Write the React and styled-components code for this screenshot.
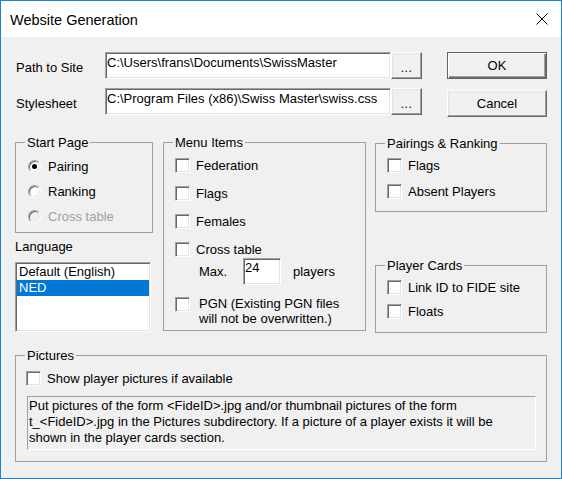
import React from 'react';
import styled, { createGlobalStyle, css } from 'styled-components';

const GlobalStyle = createGlobalStyle`
  html, body { margin: 0; padding: 0; background: #ffffff; }
  body {
    font-family: "Liberation Sans", Arial, sans-serif;
    font-size: 13px;
    color: #000;
  }
  * { box-sizing: border-box; }
`;

const sunken = css`
  border: 1px solid;
  border-color: #a0a0a0 #ffffff #ffffff #a0a0a0;
  box-shadow: inset 1px 1px 0 #696969, inset -1px -1px 0 #e3e3e3;
`;

const raised = css`
  border: 1px solid;
  border-color: #ffffff #696969 #696969 #ffffff;
  box-shadow: inset -1px -1px 0 #a0a0a0, inset 1px 1px 0 #e3e3e3;
`;

const Window = styled.div`
  width: 562px;
  height: 479px;
  border: 1px solid #1883d7;
  display: flex;
  flex-direction: column;
  background: #f0f0f0;
  overflow: hidden;
`;

const TitleBar = styled.div`
  flex: none;
  height: 36px;
  background: #ffffff;
  display: flex;
  align-items: center;
  justify-content: space-between;
  padding: 0 13px 0 9px;
`;

const Title = styled.div`
  font-size: 14.5px;
  line-height: 18px;
  padding-top: 1px;
`;

const Close = styled.svg`
  display: block;
  width: 12px;
  height: 12px;
`;

const Client = styled.div`
  flex: 1;
  padding: 15px 14px 0;
  display: flex;
  flex-direction: column;
`;

const TopArea = styled.div`
  display: flex;
  align-items: flex-start;
  height: 63px;
`;

const FieldGrid = styled.div`
  display: grid;
  grid-template-columns: 90px 286px 31px;
  grid-template-rows: 27px 27px;
  row-gap: 9px;
`;

const FieldLabel = styled.div`
  padding: 3px 0 0 1px;
  line-height: 15px;
  align-self: center;
`;

const TextField = styled.div`
  ${sunken};
  background: #ffffff;
  padding: ${(p) => p.$padTop ?? 1}px 1px 0 1px;
  line-height: 15px;
  white-space: nowrap;
  overflow: hidden;
`;

const Button = styled.div`
  ${raised};
  background: #f0f0f0;
  display: flex;
  align-items: center;
  justify-content: center;
  line-height: 15px;
`;

const Browse = styled(Button)`
  padding-top: 5px;
  font-size: 12px;
  letter-spacing: 0.5px;
`;

const ButtonColumn = styled.div`
  width: 100px;
  margin-left: 25px;
  display: flex;
  flex-direction: column;
  gap: 11px;
`;

const DialogButton = styled(Button)`
  height: 27px;
  ${(p) =>
    p.$default &&
    css`
      border: 1px solid #646464;
      box-shadow: inset 1px 1px 0 #ffffff, inset -1px -1px 0 #696969,
        inset -2px -2px 0 #a0a0a0;
    `}
`;

const Middle = styled.div`
  display: flex;
  align-items: flex-start;
  margin-top: 20px;
`;

const Column = styled.div`
  display: flex;
  flex-direction: column;
  flex: ${(p) => (p.$width ? `0 0 ${p.$width}px` : '1 1 0')};
  margin-left: ${(p) => p.$gap || 0}px;
  margin-top: ${(p) => p.$top || 0}px;
`;

const Group = styled.fieldset`
  margin: ${(p) => p.$top || 0}px 0 0 0;
  min-width: 0;
  border: 1px solid #a0a0a0;
  padding: 0;
`;

const Legend = styled.legend`
  margin-left: 9px;
  padding: 0 2px;
  line-height: 15px;
  font-size: 13px;
`;

const GroupBody = styled.div`
  display: flex;
  flex-direction: column;
  padding: ${(p) => p.$pad};
`;

const Row = styled.div`
  display: flex;
  align-items: ${(p) => (p.$start ? 'flex-start' : 'center')};
  height: ${(p) => (p.$h ? `${p.$h}px` : 'auto')};
  margin-top: ${(p) => p.$top || 0}px;
  line-height: 15px;
  white-space: nowrap;
`;

const CheckBox = styled.span`
  ${sunken};
  flex: none;
  width: 15px;
  height: 15px;
  background: #ffffff;
  margin-top: ${(p) => p.$shift || 0}px;
`;

const CheckText = styled.span`
  margin-left: ${(p) => p.$gap ?? 6}px;
`;

const RadioRow = styled.div`
  display: flex;
  align-items: center;
  height: 25px;
  line-height: 15px;
  color: ${(p) => (p.$disabled ? '#a0a0a0' : '#000')};
`;

const Radio = styled.span`
  flex: none;
  position: relative;
  width: 13px;
  height: 13px;
  border-radius: 50%;
  border: 1px solid;
  border-color: #a0a0a0 #ffffff #ffffff #a0a0a0;
  box-shadow: inset 1px 1px 0 #696969, inset -1px -1px 0 #e3e3e3;
  background: ${(p) => (p.$disabled ? '#f0f0f0' : '#ffffff')};
  margin-right: 7px;
  ${(p) =>
    p.$checked &&
    css`
      &::after {
        content: '';
        position: absolute;
        left: 3px;
        top: 3px;
        width: 5px;
        height: 5px;
        border-radius: 50%;
        background: #000;
      }
    `}
`;

const Label = styled.div`
  line-height: 15px;
  margin-top: ${(p) => p.$top || 0}px;
`;

const ListBox = styled.div`
  ${sunken};
  background: #ffffff;
  width: 136px;
  height: 70px;
  margin-top: 8px;
  padding: 1px;
`;

const ListItem = styled.div`
  height: 16px;
  line-height: 16px;
  padding-left: 2px;
  background: ${(p) => (p.$selected ? '#0078d7' : 'transparent')};
  color: ${(p) => (p.$selected ? '#ffffff' : '#000')};
`;

const MaxLabel = styled.span`
  width: 44px;
  margin-left: 24px;
`;

const SmallField = styled(TextField)`
  width: 38px;
  height: 27px;
`;

const Suffix = styled.span`
  margin-left: 12px;
`;

const Info = styled.div`
  border: 1px solid;
  border-color: #a0a0a0 #ffffff #ffffff #a0a0a0;
  margin: 10px 0 0 1px;
  height: 54px;
  padding: 1px 1px 0 1px;
  line-height: 16px;
  white-space: nowrap;
`;

function Check({ children, top, gap }) {
  return (
    <Row $top={top}>
      <CheckBox />
      <CheckText $gap={gap}>{children}</CheckText>
    </Row>
  );
}

export default function App() {
  return (
    <>
      <GlobalStyle />
      <Window>
        <TitleBar>
          <Title>Website Generation</Title>
          <Close viewBox="0 0 12 12">
            <path d="M0.5 0.5 L11.5 11.5 M11.5 0.5 L0.5 11.5" stroke="#000" strokeWidth="1" />
          </Close>
        </TitleBar>
        <Client>
          <TopArea>
            <FieldGrid>
              <FieldLabel>Path to Site</FieldLabel>
              <TextField $padTop={2}>C:\Users\frans\Documents\SwissMaster</TextField>
              <Browse>...</Browse>
              <FieldLabel>Stylesheet</FieldLabel>
              <TextField $padTop={2}>C:\Program Files (x86)\Swiss Master\swiss.css</TextField>
              <Browse>...</Browse>
            </FieldGrid>
            <ButtonColumn>
              <DialogButton $default>OK</DialogButton>
              <DialogButton>Cancel</DialogButton>
            </ButtonColumn>
          </TopArea>

          <Middle>
            <Column $width={138}>
              <Group>
                <Legend>Start Page</Legend>
                <GroupBody $pad="4px 0 3px 12px">
                  <RadioRow>
                    <Radio $checked />
                    Pairing
                  </RadioRow>
                  <RadioRow>
                    <Radio />
                    Ranking
                  </RadioRow>
                  <RadioRow $disabled>
                    <Radio $disabled />
                    Cross table
                  </RadioRow>
                </GroupBody>
              </Group>
              <Label $top={6}>Language</Label>
              <ListBox>
                <ListItem>Default (English)</ListItem>
                <ListItem $selected>NED</ListItem>
              </ListBox>
            </Column>

            <Column $width={203} $gap={10}>
              <Group>
                <Legend>Menu Items</Legend>
                <GroupBody $pad="8px 0 4px 11px">
                  <Check>Federation</Check>
                  <Check top={13}>Flags</Check>
                  <Check top={13}>Females</Check>
                  <Check top={13}>Cross table</Check>
                  <Row $top={1} $h={27}>
                    <MaxLabel>Max.</MaxLabel>
                    <SmallField>24</SmallField>
                    <Suffix>players</Suffix>
                  </Row>
                  <Row $top={11} $start>
                    <CheckBox $shift={1} />
                    <CheckText $gap={9}>
                      PGN (Existing PGN files
                      <br />
                      will not be overwritten.)
                    </CheckText>
                  </Row>
                </GroupBody>
              </Group>
            </Column>

            <Column $gap={9} $top={1}>
              <Group>
                <Legend>Pairings &amp; Ranking</Legend>
                <GroupBody $pad="7px 0 12px 11px">
                  <Check>Flags</Check>
                  <Check top={11}>Absent Players</Check>
                </GroupBody>
              </Group>
              <Group $top={46}>
                <Legend>Player Cards</Legend>
                <GroupBody $pad="7px 0 13px 11px">
                  <Check>Link ID to FIDE site</Check>
                  <Check top={9}>Floats</Check>
                </GroupBody>
              </Group>
            </Column>
          </Middle>

          <Group $top={15}>
            <Legend>Pictures</Legend>
            <GroupBody $pad="8px 10px 11px 10px">
              <Check>Show player pictures if available</Check>
              <Info>
                Put pictures of the form &lt;FideID&gt;.jpg and/or thumbnail pictures of the form
                <br />
                t_&lt;FideID&gt;.jpg in the Pictures subdirectory. If a picture of a player exists it will be
                <br />
                shown in the player cards section.
              </Info>
            </GroupBody>
          </Group>
        </Client>
      </Window>
    </>
  );
}
